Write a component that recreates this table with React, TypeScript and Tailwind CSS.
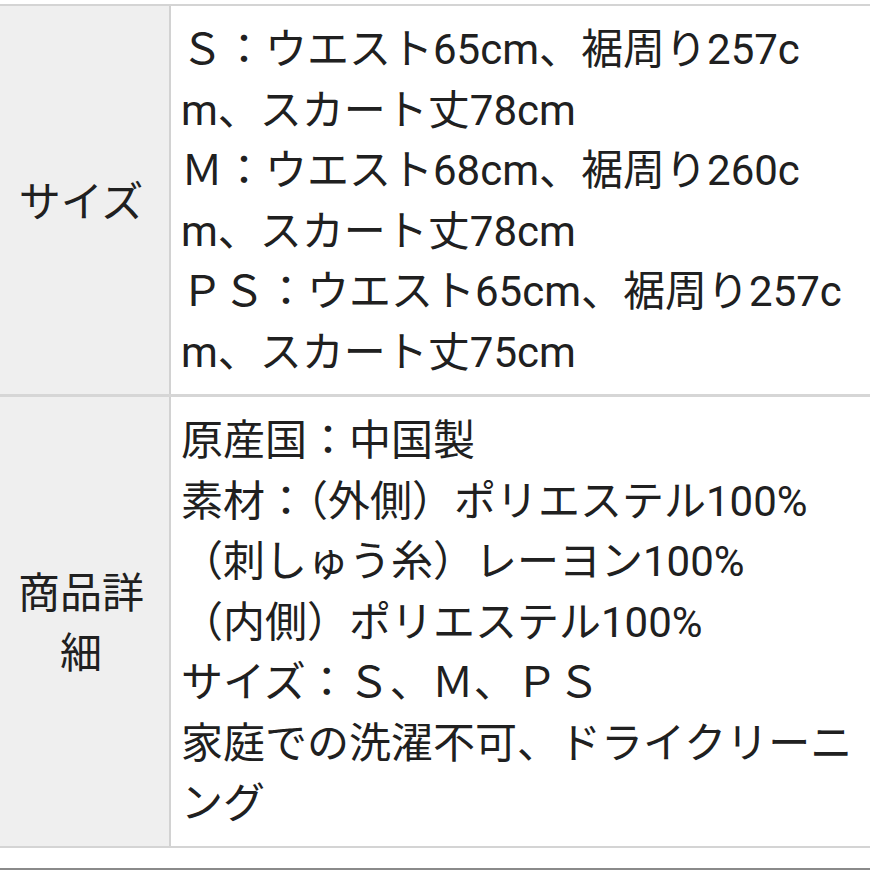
import React from 'react';

const font = { fontFamily: 'Roboto, "Noto Sans CJK JP", sans-serif' };

interface RowProps {
  label: string[];
  lines: string[];
  last?: boolean;
}

const Row: React.FC<RowProps> = ({ label, lines, last }) => (
  <div className={`flex ${last ? '' : 'border-b-[3px] border-[#d6d6d6]'}`}>
    <div className="w-[171px] shrink-0 bg-[#efefef] flex items-center justify-center pr-[7px] border-r-2 border-[#d2d2d2]">
      <div className="pt-[6px] text-center">
        {label.map((l, i) => (
          <div key={i} className="whitespace-nowrap">{l}</div>
        ))}
      </div>
    </div>
    <div className="flex-1 bg-white pl-[10px] pt-[14px] pb-[11px]">
      {lines.map((l, i) => (
        <div key={i} className="whitespace-nowrap">{l}</div>
      ))}
    </div>
  </div>
);

export default function App() {
  return (
    <div className="w-[870px] h-[870px] bg-white overflow-hidden flex flex-col text-[#202020] text-[42px] leading-[60.5px]" style={font}>
      <div className="h-[4px]" />
      <div className="border-t-2 border-b-2 border-[#d4d4d4]">
        <Row
          label={['サイズ']}
          lines={[
            'Ｓ：ウエスト65cm、裾周り257c',
            'm、スカート丈78cm',
            'Ｍ：ウエスト68cm、裾周り260c',
            'm、スカート丈78cm',
            'ＰＳ：ウエスト65cm、裾周り257c',
            'm、スカート丈75cm',
          ]}
        />
        <Row
          last
          label={['商品詳', '細']}
          lines={[
            '原産国：中国製',
            '素材：（外側）ポリエステル100%',
            '（刺しゅう糸）レーヨン100%',
            '（内側）ポリエステル100%',
            'サイズ：Ｓ、Ｍ、ＰＳ',
            '家庭での洗濯不可、ドライクリーニ',
            'ング',
          ]}
        />
      </div>
      <div className="flex-1" />
      <div className="h-[2px] bg-[#8a8a8a]" />
    </div>
  );
}
